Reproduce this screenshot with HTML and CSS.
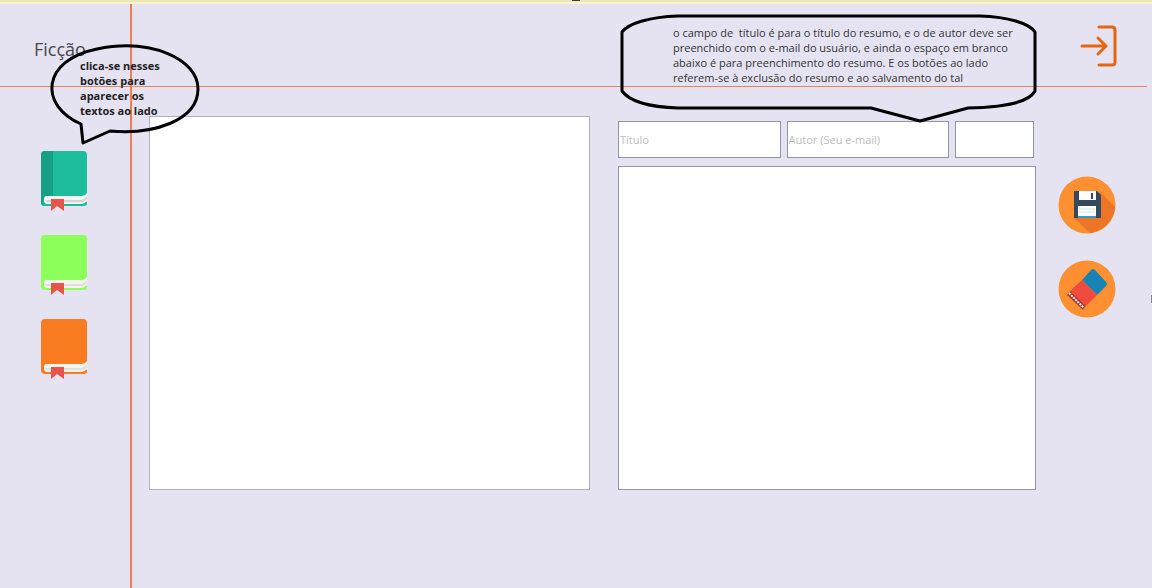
FILE: index.html
```html
<!DOCTYPE html>
<html lang="pt-BR">
<head>
<meta charset="utf-8">
<title>Ficção</title>
<link rel="stylesheet" href="styles.css">
</head>
<body>
<div class="strip"><span class="strip-mark"></span></div>
<div class="shell">
  <aside class="sidebar">
    <div class="brand"><h1 class="title">Ficção</h1></div>
    <nav class="books">
      <button class="icon-button book teal" type="button" aria-label="Livro 1">
        <svg width="46" height="61" viewBox="0 0 46 61"><path class="cover" d="M4 0H42Q46 0 46 4V43Q46 45 44 46L43 50L46 51V52Q46 55 43 55H4Q0 55 0 51V4Q0 0 4 0Z"/><path class="spine" d="M4 0H12V46H5Q2 47 2 51L3 55Q0 54 0 51V4Q0 0 4 0Z"/><path fill="#f4f4f2" d="M5 45H41Q44 45 46 42V46L42 49L46 48V49Q44 53 40 53H6Q3 53 3 49Q3 45 5 45Z"/><path fill="#d2d4d2" d="M5 49H41L46 46V48L42 51H5Z"/><path class="ribbon" d="M10 48H23V60L16 55L10 60Z"/></svg>
      </button>
      <button class="icon-button book green" type="button" aria-label="Livro 2">
        <svg width="46" height="61" viewBox="0 0 46 61"><path class="cover" d="M4 0H42Q46 0 46 4V43Q46 45 44 46L43 50L46 51V52Q46 55 43 55H4Q0 55 0 51V4Q0 0 4 0Z"/><path fill="#f4f4f2" d="M5 45H41Q44 45 46 42V46L42 49L46 48V49Q44 53 40 53H6Q3 53 3 49Q3 45 5 45Z"/><path fill="#e0e0da" d="M5 49H41L46 46V48L42 51H5Z"/><path class="ribbon" d="M10 48H23V60L16 55L10 60Z"/></svg>
      </button>
      <button class="icon-button book orange" type="button" aria-label="Livro 3">
        <svg width="46" height="61" viewBox="0 0 46 61"><path class="cover" d="M4 0H42Q46 0 46 4V43Q46 45 44 46L43 50L46 51V52Q46 55 43 55H4Q0 55 0 51V4Q0 0 4 0Z"/><path fill="#f4f4f2" d="M5 45H41Q44 45 46 42V46L42 49L46 48V49Q44 53 40 53H6Q3 53 3 49Q3 45 5 45Z"/><path fill="#e0e0da" d="M5 49H41L46 46V48L42 51H5Z"/><path class="ribbon" d="M10 48H23V60L16 55L10 60Z"/></svg>
      </button>
    </nav>
    <div class="callout callout-books">
      <svg class="bubble" width="150" height="102" viewBox="0 0 150 102"><path d="M31 80C-12 61 -8 16 47 5C101 -6 148 15 148 45C148 77 102 91 60 87L33 99Z"/></svg>
      <p class="callout-text bold">clica-se nesses<br>botões para<br>aparecer os<br>textos ao lado</p>
    </div>
  </aside>
  <div class="content">
    <header class="topbar">
      <button class="icon-button" type="button" aria-label="Sair">
        <svg width="38" height="44" viewBox="0 0 38 44" fill="none" stroke="#e8650f" stroke-width="3" stroke-linecap="round" stroke-linejoin="round"><path d="M20 3H33Q36 3 36 6V38Q36 41 33 41H20"/><path d="M3 22H27M19 14L27 22L19 30"/></svg>
      </button>
    </header>
    <main class="workspace">
      <textarea class="field reader" aria-label="Texto" readonly></textarea>
      <form class="editor">
        <div class="fields">
          <input class="field" type="text" placeholder="Título" aria-label="Título">
          <input class="field" type="text" placeholder="Autor (Seu e-mail)" aria-label="Autor">
          <input class="field" type="text" aria-label="Complemento">
        </div>
        <textarea class="field summary" aria-label="Resumo"></textarea>
        <div class="callout callout-form">
          <svg class="bubble" width="418" height="108" viewBox="0 0 418 108"><path d="M60 2H362C390 3 411 9 417 18V77C411 88 390 93 350 94L302 107L253 94H60C32 93 12 88 4 77V18C11 9 32 3 60 2Z"/></svg>
          <p class="callout-text">o campo de &nbsp;título é para o título do resumo, e o de autor deve ser<br>preenchido com o e-mail do usuário, e ainda o espaço em branco<br>abaixo é para preenchimento do resumo. E os botões ao lado<br>referem-se à exclusão do resumo e ao salvamento do tal</p>
        </div>
      </form>
      <div class="actions">
        <button class="icon-button" type="button" aria-label="Salvar">
          <svg width="58" height="58" viewBox="0 0 58 58"><circle cx="29" cy="29" r="28.5" fill="#ff9031"/><path fill="#ed7626" d="M42 16L57 31A28.5 28.5 0 0 1 32 57L16 42Z"/><path fill="#34495e" d="M16 15H39L43 19V42H16Z"/><path fill="#fff" d="M21 15H38V24H21Z"/><path fill="#34495e" d="M33 17H35V23H33Z"/><path fill="#fff" d="M20 30H38V40H20Z"/><path stroke="#d6e4e8" d="M21 33H37M21 36H37"/><path fill="#2b9fc4" d="M20 40H38V42H20Z"/></svg>
        </button>
        <button class="icon-button" type="button" aria-label="Apagar">
          <svg width="58" height="58" viewBox="0 0 58 58"><circle cx="29" cy="29" r="28.5" fill="#ff9031"/><path fill="#1883b5" d="M33 10Q35 8 37 10L48 22Q50 24 48 26L39 35L24 20Z"/><path fill="#ef4b3e" d="M24 20L39 35L28 46L12 31Z"/><path fill="#b53228" d="M12 31L28 46L25 50L9 35Z"/><path d="M11 33L26 48" stroke="#fff" stroke-width="2" stroke-dasharray="2 1"/></svg>
        </button>
      </div>
    </main>
  </div>
</div>
<span class="edge-mark"></span>
</body>
</html>
```
FILE: styles.css
```css
* { box-sizing: border-box; }

body {
  margin: 0;
  min-height: 100vh;
  display: flex;
  flex-direction: column;
  position: relative;
  background: #e5e3f1;
  color: #333338;
  font-family: "Open Sans", "Noto Sans", sans-serif;
}

.strip {
  height: 4px;
  background: linear-gradient(#eee8b8 50%, #f8f6d0 50%);
}

.strip-mark {
  display: block;
  width: 8px;
  height: 1px;
  margin: 0 auto;
  background: #444;
}

.shell {
  flex: 1;
  display: grid;
  grid-template-columns: 132px 1fr;
}

.sidebar {
  position: relative;
  border-right: 2px solid #fa7c48;
}

.brand,
.topbar {
  height: 83px;
  border-bottom: 1px solid #e98260;
}

.brand { padding: 33px 0 0 34px; }

.title {
  margin: 0;
  font-size: 18px;
  line-height: 24px;
  font-weight: 400;
  color: #48484e;
}

.books {
  display: flex;
  flex-direction: column;
  align-items: flex-start;
  gap: 23px;
  padding: 64px 0 0 41px;
}

.icon-button {
  display: block;
  padding: 0;
  border: 0;
  background: none;
  cursor: pointer;
}

.icon-button svg,
.bubble { display: block; }

.ribbon { fill: #e75549; }
.spine { fill: #16a085; }
.teal .cover { fill: #1cbc9c; }
.green .cover { fill: #8cff5a; }
.orange .cover { fill: #f97c20; }

.content {
  display: flex;
  flex-direction: column;
}

.topbar {
  display: flex;
  justify-content: flex-end;
  align-items: flex-start;
  margin-right: 5px;
  padding: 20px 30px 0 0;
}

.workspace {
  flex: 1;
  display: grid;
  grid-template-columns: 441fr 418fr 52px;
  column-gap: 28px;
  padding: 29px 36px 98px 17px;
}

.field {
  min-width: 0;
  margin: 0;
  padding: 0 1px;
  border: 1px solid #9193aa;
  border-radius: 0;
  background: #fff;
  font: inherit;
  font-size: 11px;
  resize: none;
}

.field::placeholder {
  color: #bdbdbd;
  opacity: 1;
}

.reader { border-color: #b0b2c2; }

.editor {
  position: relative;
  display: flex;
  flex-direction: column;
  gap: 8px;
  padding-top: 5px;
}

.fields {
  display: grid;
  grid-template-columns: 163fr 163fr 79fr;
  gap: 6px;
  padding-right: 2px;
}

.fields .field { height: 37px; }

.summary { flex: 1; }

.actions {
  display: flex;
  flex-direction: column;
  gap: 26px;
  margin-left: -6px;
  padding-top: 60px;
}

.callout {
  position: absolute;
  z-index: 1;
  pointer-events: none;
}

.callout-books {
  top: 40px;
  left: 50px;
}

.callout-form {
  top: -102px;
  right: 0;
}

.bubble {
  overflow: visible;
  fill: none;
  stroke: #000;
  stroke-width: 3;
  stroke-linejoin: round;
}

.callout-text {
  position: absolute;
  inset: 11px 0 auto 55px;
  margin: 0;
  font-size: 11px;
  line-height: 15px;
  white-space: nowrap;
}

.bold {
  inset: 14px 0 auto 30px;
  font-weight: 700;
  color: #222226;
}

.edge-mark {
  position: absolute;
  top: 295px;
  right: 0;
  width: 1px;
  height: 8px;
  background: #888;
}
```
